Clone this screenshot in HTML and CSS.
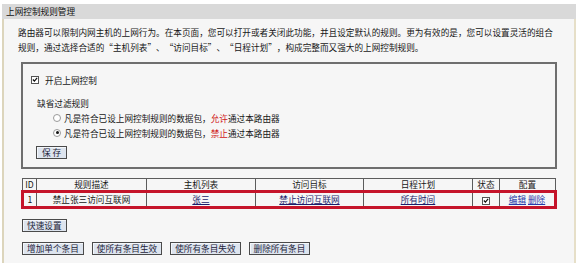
FILE: index.html
```html
<!DOCTYPE html>
<html lang="zh-CN">
<head>
  <meta charset="UTF-8" />
  <title>上网控制规则管理</title>
  <link rel="stylesheet" href="styles.css">
</head>
<body>
  <div class="panel">
    <div class="title">上网控制规则管理</div>
    <div class="content">
      <p class="intro">路由器可以限制内网主机的上网行为。在本页面，您可以打开或者关闭此功能，并且设定默认的规则。更为有效的是，您可以设置灵活的组合规则，通过选择合适的“主机列表”、“访问目标”、“日程计划”，构成完整而又强大的上网控制规则。</p>

      <div class="box">
        <div class="row">
          <span class="check"><svg viewBox="0 0 7 7" width="7" height="7"><path d="M1 3.5 L2.8 5.3 L6 1.5" fill="none" stroke="#111" stroke-width="1.4"/></svg></span>
          <span class="label">开启上网控制</span>
        </div>
        <div class="row sub">缺省过滤规则</div>
        <div class="row opt">
          <span class="radio"></span>
          <span>凡是符合已设上网控制规则的数据包，<em>允许</em>通过本路由器</span>
        </div>
        <div class="row opt">
          <span class="radio on"></span>
          <span>凡是符合已设上网控制规则的数据包，<em>禁止</em>通过本路由器</span>
        </div>
        <button class="btn save">保 存</button>
      </div>

      <table class="rules">
        <colgroup>
          <col style="width:14px">
          <col style="width:110px">
          <col style="width:109px">
          <col style="width:108px">
          <col style="width:109px">
          <col style="width:27px">
          <col>
        </colgroup>
        <tr class="head">
          <td>ID</td>
          <td>规则描述</td>
          <td>主机列表</td>
          <td>访问目标</td>
          <td>日程计划</td>
          <td>状态</td>
          <td>配置</td>
        </tr>
        <tr class="hit">
          <td>1</td>
          <td>禁止张三访问互联网</td>
          <td><a href="#">张三</a></td>
          <td><a href="#">禁止访问互联网</a></td>
          <td><a href="#">所有时间</a></td>
          <td><span class="check small"><svg viewBox="0 0 7 7" width="7" height="7"><path d="M1 3.5 L2.8 5.3 L6 1.5" fill="none" stroke="#111" stroke-width="1.4"/></svg></span></td>
          <td><a class="op" href="#">编辑</a> <a class="op" href="#">删除</a></td>
        </tr>
      </table>

      <div class="actions">
        <button class="btn">快速设置</button>
      </div>
      <div class="actions bottom">
        <button class="btn">增加单个条目</button>
        <button class="btn">使所有条目生效</button>
        <button class="btn">使所有条目失效</button>
        <button class="btn">删除所有条目</button>
      </div>
    </div>
  </div>
</body>
</html>
```

FILE: styles.css
```css
body {
  margin: 0;
  background-color: #fff;
  font-family: "Noto Sans CJK SC", sans-serif;
  font-size: 8.65px;
  color: #161616;
}
.panel {
  margin: 4px 3px 0 2px;
}
.title {
  height: 15px;
  line-height: 15px;
  padding-left: 4px;
  background-color: #d9d9d9;
  color: #111;
}
.content {
  background-color: #f6f6f6;
  border-left: 2px solid #dcd5bc;
  border-right: 2px solid #e6dfc8;
  padding: 6px 0 10px 14px;
  min-height: 228px;
}
.intro {
  margin: 0;
  width: 540px;
  line-height: 15px;
  font-feature-settings: "fwid";
  text-spacing-trim: space-all;
}
.box {
  box-sizing: border-box;
  width: 536px;
  margin: 7px 0 0 3px;
  border: 2px solid #6e6e6e;
  padding: 8px 0 8px 8px;
}
.row {
  display: flex;
  align-items: center;
  height: 15px;
}
.row.sub {
  margin: 8px 0 0 6px;
}
.row.opt {
  margin-left: 22px;
  gap: 3px;
}
em {
  font-style: normal;
  color: #d01818;
}
.check {
  display: inline-flex;
  align-items: center;
  justify-content: center;
  box-sizing: border-box;
  width: 8px;
  height: 8px;
  border: 1px solid #555;
  background-color: #fff;
  margin-right: 6px;
}
.check.small {
  margin: 0 auto;
  vertical-align: middle;
}
.radio {
  box-sizing: border-box;
  width: 8px;
  height: 8px;
  border: 1px solid #9a9a9a;
  border-radius: 50%;
  background-color: #fff;
  position: relative;
}
.radio.on::after {
  content: "";
  position: absolute;
  left: 1.5px;
  top: 1.5px;
  width: 3px;
  height: 3px;
  border-radius: 50%;
  background-color: #111;
}
.btn {
  font-family: inherit;
  font-size: 8.65px;
  height: 13px;
  line-height: 11px;
  padding: 0 4px;
  margin: 0;
  border: 1px solid #4a4a4a;
  background-color: #dde4ee;
  color: #1e1e3a;
  box-shadow: inset 1px 1px 0 #f4f7fb;
}
.btn.save {
  display: block;
  margin: 6px 0 0 5px;
  padding: 0 5px;
}
.rules {
  table-layout: fixed;
  border-collapse: collapse;
  width: 536px;
  margin: 9px 0 0 3px;
}
.rules td {
  border: 1px solid #5c5c5c;
  padding: 0;
  text-align: center;
  line-height: 11px;
  height: 11px;
  white-space: nowrap;
  overflow: hidden;
}
.rules .hit td {
  border-top: 3px solid #c5142a;
  border-bottom: 3px solid #c5142a;
  height: 13px;
}
.rules .hit td:first-child {
  border-left: 3px solid #c5142a;
}
.rules .hit td:last-child {
  border-right: 3px solid #c5142a;
}
a {
  color: #1c1c6a;
}
a.op {
  color: #2a3aa8;
}
.actions {
  display: flex;
  gap: 8px;
  margin: 10px 0 0 4px;
}
.actions.bottom {
  margin-top: 10px;
}
```
